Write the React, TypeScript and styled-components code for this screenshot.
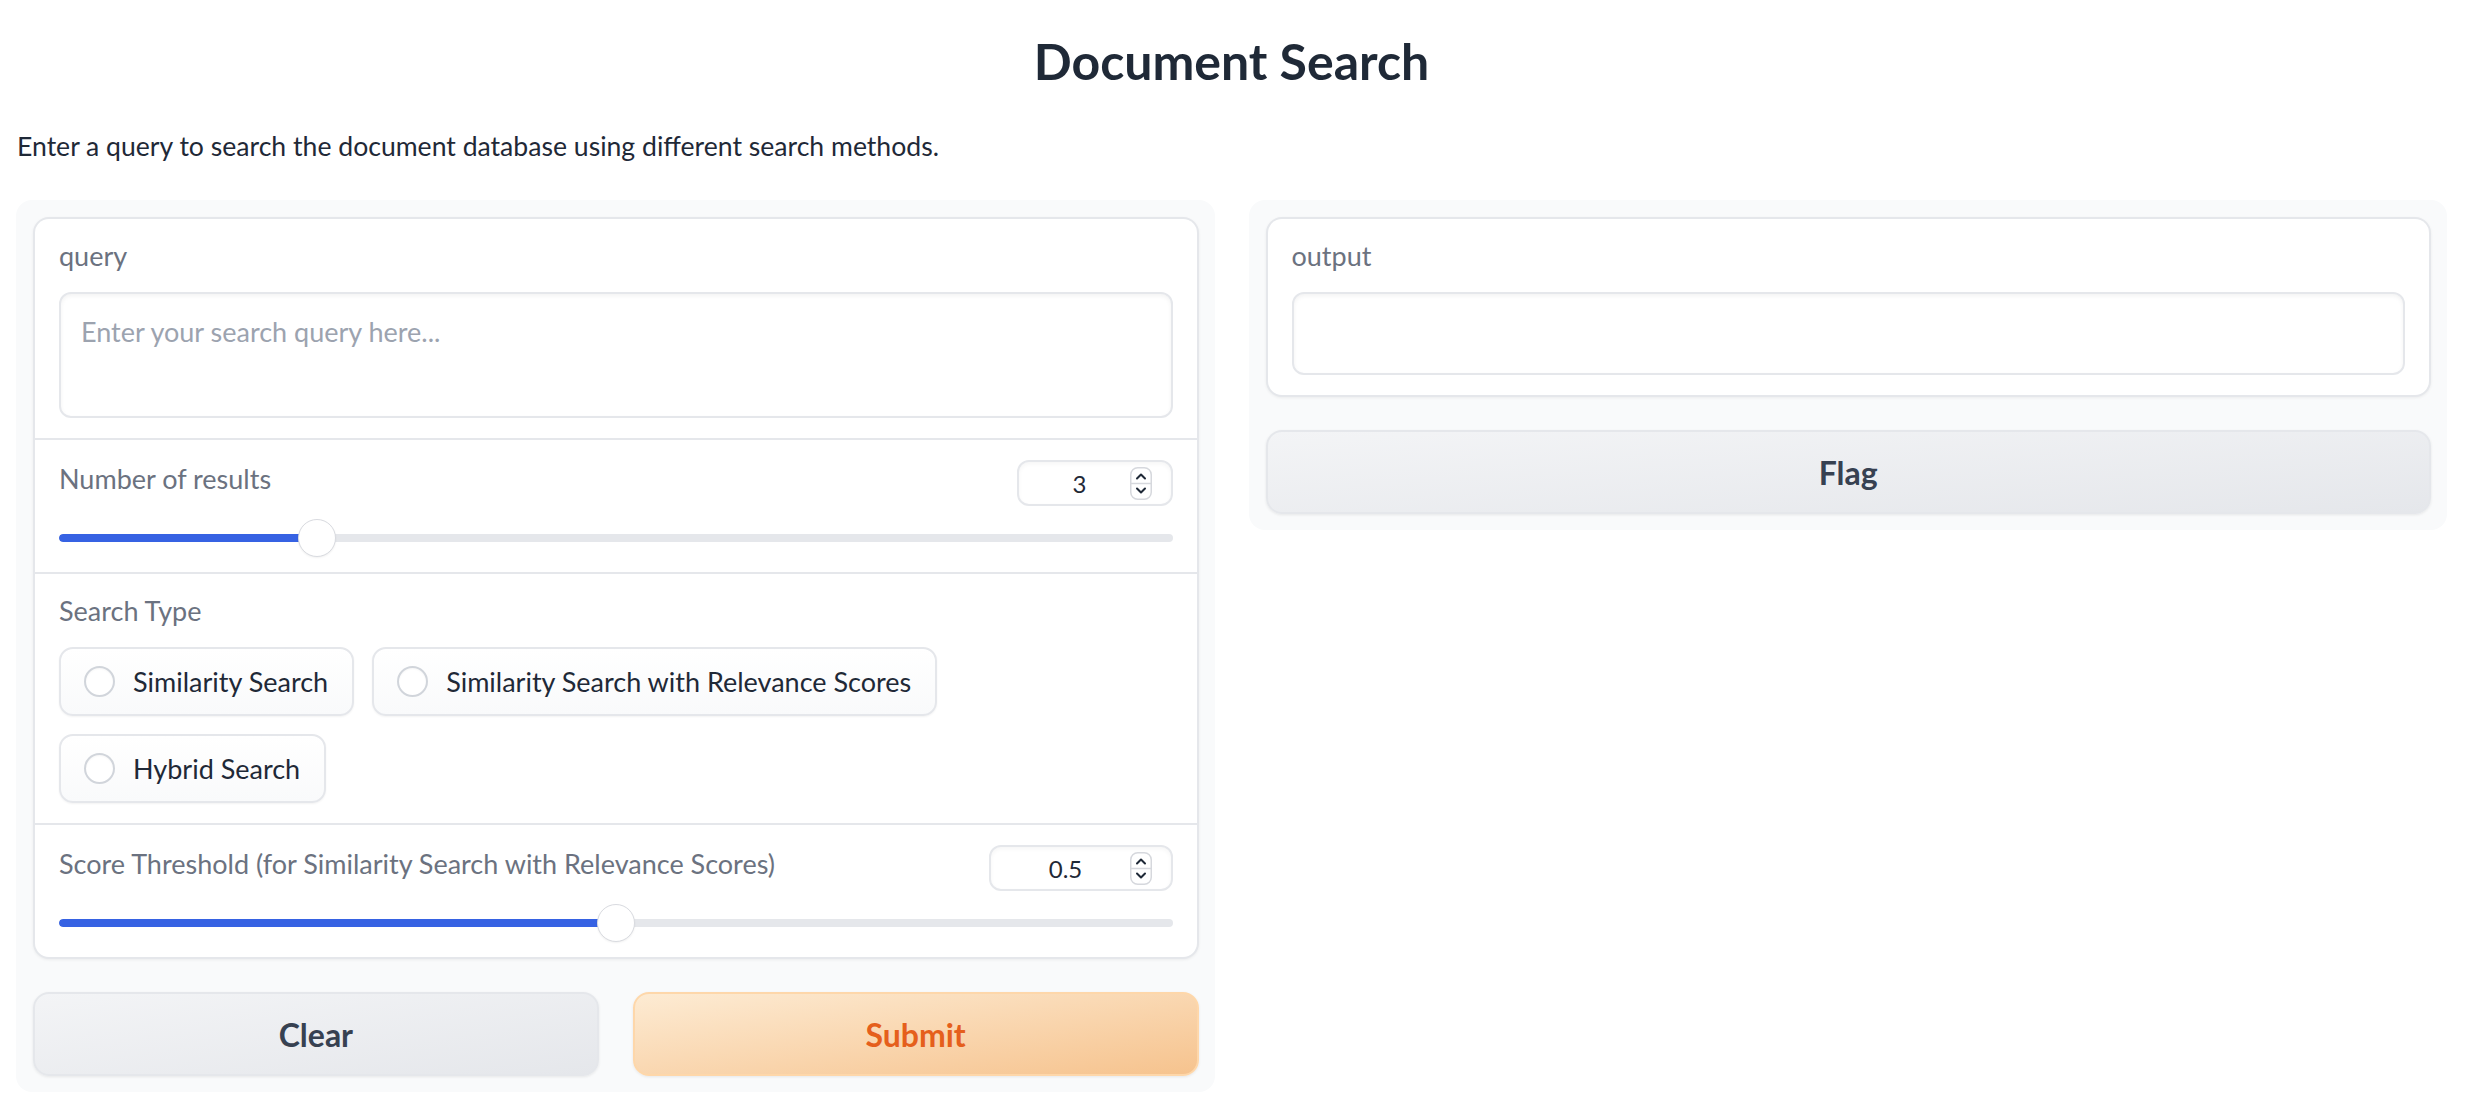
import React from "react";
import styled, { createGlobalStyle } from "styled-components";

const GlobalStyle = createGlobalStyle`
  html, body { margin: 0; padding: 0; background: #ffffff; }
  body { font-family: Lato, "Noto Sans", sans-serif; color: #1f2937; }
  * { box-sizing: border-box; }
`;

const Page = styled.div`
  width: 2431px;
  margin-left: 16px;
  padding-top: 31px;
  padding-bottom: 20px;
`;

const Title = styled.h1`
  margin: 0;
  text-align: center;
  font-size: 50px;
  font-weight: 700;
  line-height: 60px;
  color: #1f2937;
`;

const Description = styled.p`
  margin: 36px 0 34px;
  padding-left: 1px;
  font-size: 26.6px;
  line-height: 39px;
  color: #1f2937;
`;

const Columns = styled.div`
  display: grid;
  grid-template-columns: 1fr 1fr;
  gap: 34px;
  align-items: start;
`;

const Panel = styled.div`
  background: #f9fafb;
  border-radius: 16px;
  padding: 17px 16px 16px 17px;
  display: flex;
  flex-direction: column;
  gap: 33px;
`;

const Card = styled.div`
  background: #e5e7eb;
  border: 2px solid #e5e7eb;
  border-radius: 16px;
  overflow: hidden;
  display: flex;
  flex-direction: column;
  gap: 2px;
  box-shadow: 0 1px 3px rgba(0, 0, 0, 0.06);
`;

const Block = styled.div<{ $pb?: number }>`
  background: #ffffff;
  padding: 20px 24px ${(p) => (p.$pb ?? 20)}px;
`;

const Label = styled.div<{ $mb?: number; $mt?: number }>`
  font-size: 27px;
  line-height: 34px;
  color: #6b7280;
  margin-top: ${(p) => p.$mt ?? 0}px;
  margin-bottom: ${(p) => p.$mb ?? 19}px;
`;

const TextInput = styled.textarea<{ $h: number }>`
  display: block;
  width: 100%;
  height: ${(p) => p.$h}px;
  resize: none;
  border: 2px solid #e5e7eb;
  border-radius: 12px;
  background: #ffffff;
  box-shadow: inset 0 2px 4px rgba(0, 0, 0, 0.05);
  padding: 17px 20px;
  font-family: inherit;
  font-size: 27px;
  line-height: 41px;
  color: #1f2937;
  outline: none;
  &::placeholder { color: #9ca3af; }
`;

const SliderHeader = styled.div`
  display: flex;
  justify-content: space-between;
  align-items: flex-start;
`;

const NumberBox = styled.div<{ $w: number }>`
  display: flex;
  align-items: center;
  width: ${(p) => p.$w}px;
  height: 46px;
  border: 2px solid #e5e7eb;
  border-radius: 12px;
  background: #ffffff;
  box-shadow: inset 0 2px 4px rgba(0, 0, 0, 0.04);
  padding: 0 19px 0 11px;
`;

const NumberValue = styled.span`
  flex: 1;
  text-align: center;
  font-size: 24px;
  color: #1f2937;
`;

const SliderWrap = styled.div`
  position: relative;
  height: 40px;
  margin-top: 12px;
`;

const Track = styled.div`
  position: absolute;
  left: 0;
  right: 0;
  top: 16px;
  height: 8px;
  border-radius: 4px;
  background: #e5e7eb;
  overflow: hidden;
`;

const Fill = styled.div`
  height: 100%;
  background: #3662e3;
  border-radius: 4px 0 0 4px;
`;

const Thumb = styled.div`
  position: absolute;
  top: 1px;
  width: 38px;
  height: 38px;
  border-radius: 50%;
  background: #ffffff;
  border: 1px solid #d9dbe0;
  box-shadow: 0 1px 2px rgba(0, 0, 0, 0.06);
`;

const RadioGroup = styled.div`
  display: flex;
  flex-wrap: wrap;
  gap: 18px;
`;

const RadioPill = styled.label`
  display: inline-flex;
  align-items: center;
  gap: 18px;
  padding: 12px 24px 12px 23px;
  border: 2px solid #e5e7eb;
  border-radius: 14px;
  background: linear-gradient(to top, #f9fafb, #ffffff);
  box-shadow: 0 1px 2px rgba(0, 0, 0, 0.05);
  font-size: 27px;
  line-height: 41px;
  color: #1f2937;
`;

const RadioCircle = styled.span`
  width: 31px;
  height: 31px;
  border-radius: 50%;
  border: 2px solid #d1d5db;
  background: #ffffff;
  box-shadow: inset 0 1px 2px rgba(0, 0, 0, 0.04);
`;

const ButtonRow = styled.div`
  display: grid;
  grid-template-columns: 1fr 1fr;
  gap: 34px;
`;

const Button = styled.button<{ $primary?: boolean }>`
  height: 84px;
  width: 100%;
  border-radius: 16px;
  border: 2px solid ${(p) => (p.$primary ? "#fed7aa" : "#e5e7eb")};
  background: ${(p) =>
    p.$primary
      ? "linear-gradient(to bottom right, #fdebd3, #f6c38e)"
      : "linear-gradient(to bottom right, #f3f4f6, #e5e7eb)"};
  color: ${(p) => (p.$primary ? "#e55f1c" : "#374151")};
  box-shadow: 0 1px 3px rgba(0, 0, 0, 0.08);
  font-family: inherit;
  font-size: 32px;
  font-weight: 700;
  cursor: pointer;
`;

const Spinner = () => (
  <svg width="22" height="33" viewBox="0 0 22 33">
    <rect x="0.75" y="0.75" width="20.5" height="31.5" rx="7" fill="#ffffff" stroke="#d6d8dd" strokeWidth="1.5" />
    <line x1="1" y1="16.5" x2="21" y2="16.5" stroke="#d6d8dd" strokeWidth="1.5" />
    <path d="M7 11.5 L11 7.5 L15 11.5" fill="none" stroke="#1f2937" strokeWidth="2" strokeLinecap="round" strokeLinejoin="round" />
    <path d="M7 21.5 L11 25.5 L15 21.5" fill="none" stroke="#1f2937" strokeWidth="2" strokeLinecap="round" strokeLinejoin="round" />
  </svg>
);

type SliderProps = {
  label: string;
  value: number;
  display: string;
  min: number;
  max: number;
  boxWidth: number;
};

const SliderField = ({ label, value, display, min, max, boxWidth }: SliderProps) => {
  const pct = (value - min) / (max - min);
  const center = `calc(19px + ${pct} * (100% - 38px))`;
  return (
    <Block $pb={14}>
      <SliderHeader>
        <Label $mb={0} $mt={2}>{label}</Label>
        <NumberBox $w={boxWidth}>
          <NumberValue>{display}</NumberValue>
          <Spinner />
        </NumberBox>
      </SliderHeader>
      <SliderWrap>
        <Track>
          <Fill style={{ width: center }} />
        </Track>
        <Thumb style={{ left: `calc(${pct} * (100% - 38px))` }} />
      </SliderWrap>
    </Block>
  );
};

const options = ["Similarity Search", "Similarity Search with Relevance Scores", "Hybrid Search"];

export default function App() {
  return (
    <>
      <GlobalStyle />
      <Page>
        <Title>Document Search</Title>
        <Description>Enter a query to search the document database using different search methods.</Description>
        <Columns>
          <Panel>
            <Card>
              <Block>
                <Label>query</Label>
                <TextInput $h={126} placeholder="Enter your search query here..." rows={2} />
              </Block>
              <SliderField label="Number of results" value={3} display="3" min={1} max={10} boxWidth={156} />
              <Block>
                <Label>Search Type</Label>
                <RadioGroup>
                  {options.map((o) => (
                    <RadioPill key={o}>
                      <RadioCircle />
                      {o}
                    </RadioPill>
                  ))}
                </RadioGroup>
              </Block>
              <SliderField
                label="Score Threshold (for Similarity Search with Relevance Scores)"
                value={0.5}
                display="0.5"
                min={0}
                max={1}
                boxWidth={184}
              />
            </Card>
            <ButtonRow>
              <Button>Clear</Button>
              <Button $primary>Submit</Button>
            </ButtonRow>
          </Panel>
          <Panel>
            <Card>
              <Block>
                <Label>output</Label>
                <TextInput $h={83} rows={1} />
              </Block>
            </Card>
            <Button>Flag</Button>
          </Panel>
        </Columns>
      </Page>
    </>
  );
}
